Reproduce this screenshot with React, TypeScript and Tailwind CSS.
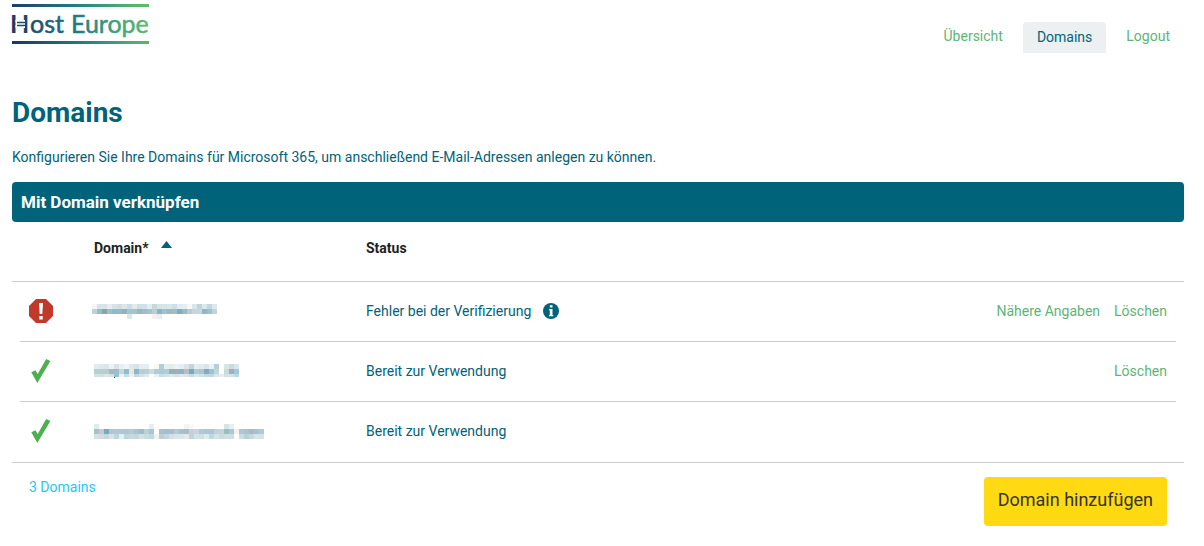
type DomainRow = {
  id: string;
  ok: boolean;
  status: string;
  actions: string[];
  mask: string[][];
};

// Masked domain names, one colour per 5px cell ("-" = empty)
const domains: DomainRow[] = [
  {
    id: "domain-1",
    ok: false,
    status: "Fehler bei der Verifizierung",
    actions: ["Nähere Angaben", "Löschen"],
    mask: [
      "f4f5f4 d3e5ea d8e3e4 e3eef1 d5e4ea d1dfe0 dbe8ea c9dfe6 e3eaea cfdfe6 cfe1ea e2eef2 c7d7dc d4e5e9 d8e5e8 dae6e8 cbe1e8 e1eeef e2eff2 f6f8f6 d9e5ec c1d4dd dae7ec c2d8de dceaed".split(" "),
      "c0d1d5 92bdca 88a6aa 9bc0ca 91b9c8 92bbc8 8fb2bc a2c5cf a2c4cd 9eb5bb a4bbc4 a5c4cc b9cfd2 90b4bf 9cc4d0 9dbac4 a7b9c1 74afc4 9dbac1 b2cdd5 cbd5d8 c5d8db 92b5c1 9ec0cf c2d4db".split(" "),
      "- - - - - - - d9e7e9 - - - - f5efee e3f1f6".split(" "),
    ],
  },
  {
    id: "domain-2",
    ok: true,
    status: "Bereit zur Verwendung",
    actions: ["Löschen"],
    mask: [
      "e2ecee dde9eb d9e6ea edf3f5 d3e4eb e7eff1 f0f4f5 dce9ed d4e5e8 e6eef0 e4edf0 - f7f8f4 b1ced6 e3eeef e2edef ecf2f3 e3eef0 d8e4e9 c4d4d9 e5eef2 e3eced d8e6ea ebf1f5 b6ced7 - d7e5e5 c8dcdf d9e7ed".split(" "),
      "b8ced3 b7ced4 b8cdd2 a6b8bb 9cbfca c4d9df 96bbc8 e9e6df 8db5c6 b8ccd2 bccfd8 cbdde0 b3cdd7 a9cbd5 b2ccd2 97b0b6 9eb0b4 90b4bf b6bec2 75abbf b2cad1 aec5ce 82aaba a2c1cd c1d5dd - cbd9d8 a1afbd 9fc8d8".split(" "),
      "d5e2e4 d2e1e5 dce6e8 dcdfe2 91c3d1 eaf1f2 c5dde4 e8f2f3 c5d7d9 d6e3e6 dce9ec - e6eff1 c6dfe6 d1e2e6 dce8ec d3e2e7 dde9ec dde4e8 c4dbe2 d8e5ea d0e1e5 c4d9de bfd7de dae8ed e4efee d3e1e3 d5e1e8 bbd9e1".split(" "),
    ],
  },
  {
    id: "domain-3",
    ok: true,
    status: "Bereit zur Verwendung",
    actions: [],
    mask: [
      "e0eceb - - - - - - - - - - e7eef0 - - - - - - f0f4f5 f8fbfc - - - - - - d4e4e4 e5eef1".split(" "),
      "a9c2c9 c1cbd0 77abbd a8cbd1 b0cad0 aac9d1 adc7d2 b0ced1 a9c5c9 99bfce bbd2d2 a9c8ce - a9c1c8 a1c2cc a2c1cf b5cad4 a6c3cc aeb9ca bfd4da cbd5d7 aecad3 a7c8d4 abc8d0 bdd3d9 c1d4d8 9bbdc0 adc8d2 f6eeec adc8d3 acc3c7 9fbdca a4c3ce b1c9d3".split(" "),
      "d4e1e5 d7d9dd c9d6dc e4dfe1 b9d8e1 e6f0f2 bdd7de c9dadd c6d7da d5e1e3 cadce0 bed9df eef4f3 c0ccd2 c4d5dc d1e1e8 dce3e9 dce6ea e8ebe5 c2d1dc d3e3e8 d0e1e6 e1e9ed bfd9e0 d3e3e8 c8dce1 d0dfe4 d3dce4 - c9dde3 b5d1da c6dadd d7e4e8 d5e2e6".split(" "),
    ],
  },
];

const Logo = () => (
  <svg
    width="141"
    height="42"
    viewBox="-3 0 141 42"
    role="img"
    aria-label="HostEurope"
    className="-ml-[3px]"
  >
    <defs>
      <linearGradient id="brand" gradientUnits="userSpaceOnUse" x1="0" y1="36" x2="137" y2="8">
        <stop offset="0" stopColor="#1f3561" />
        <stop offset="0.5" stopColor="#218083" />
        <stop offset="0.8" stopColor="#48a878" />
        <stop offset="1" stopColor="#63bb66" />
      </linearGradient>
    </defs>
    <rect y="1" width="137" height="3" fill="url(#brand)" />
    <rect y="38" width="137" height="3" fill="url(#brand)" />
    <g fill="url(#brand)" stroke="url(#brand)" strokeWidth="0.5" fontFamily="Lato, sans-serif" fontSize="25">
      <text x="-2" y="30" fontWeight="700" stroke="none">
        H
      </text>
      <text x="18" y="30">ost</text>
      <text x="59" y="30">Europe</text>
    </g>
    {/* split crossbar of the H */}
    <rect x="3.5" y="17" width="9.5" height="8" fill="#fff" />
    <path d="M5 19.500h8.500M5 22.500h8.500" stroke="#1f4a6c" strokeWidth="1.500" />
  </svg>
);

const ErrorIcon = () => (
  <svg width="24" height="24" viewBox="0 0 24 24" role="img" aria-label="Fehler">
    <path d="M7 0h10l7 7v10l-7 7H7l-7-7V7z" fill="#c0392b" />
    <path d="M10 4h4l-.7 11h-2.6zM10.300 17h3.400v3.400h-3.400z" fill="#fff" />
  </svg>
);

const CheckIcon = () => (
  <svg width="20" height="24" viewBox="0 0 20 24" role="img" aria-label="Bereit">
    <path d="M0.300 13.300L4.500 11.300L6.700 15L15.200 0L19.400 2L6.300 24Z" fill="#4caf50" />
  </svg>
);

const InfoIcon = () => (
  <svg width="16" height="16" viewBox="0 0 16 16" aria-hidden="true">
    <circle cx="8" cy="8" r="8" fill="#00637a" />
    <path d="M6.800 2.300h2.700v2.200h-2.700zM6 6h3.500v6h.8v1.200H6V12h.8V7.200H6z" fill="#fff" />
  </svg>
);

const MaskedName = ({ row }: { row: DomainRow }) => (
  <svg
    width={row.mask[1].length * 5}
    height="15"
    shapeRendering="crispEdges"
    className={row.ok ? "" : "-ml-0.5"}
    aria-hidden="true"
  >
    {row.mask.map((line, y) =>
      line.map((color, x) =>
        color === "-" ? null : (
          <rect
            key={`${x}-${y}`}
            x={x * 5}
            y={y * 5}
            width="5"
            height={row.id === "domain-2" && y === 2 ? 3 : 5}
            fill={`#${color}`}
          />
        ),
      ),
    )}
    {row.id === "domain-2" && <rect x="20" y="13" width="1" height="1" fill="#00637a" />}
  </svg>
);

const App = () => {
  return (
    <div className="pl-3 pr-5 font-[Roboto,sans-serif] text-sm text-[#00637a]">
      <header className="flex items-start justify-between pt-[3px]">
        <a href="#home">
          <Logo />
        </a>
        <nav className="flex items-start pt-[19px] leading-[21px] text-[#5cb577]">
          <a href="#uebersicht" className="px-5 py-1">
            Übersicht
          </a>
          <a
            href="#domains"
            aria-current="page"
            className="rounded-t bg-[#ecf0f1] px-3.5 py-[5px] text-[#00637a]"
          >
            Domains
          </a>
          <a href="#logout" className="py-1 pl-5 pr-3.5">
            Logout
          </a>
        </nav>
      </header>

      <main>
        <h1 className="mt-11 text-[28px] font-bold leading-8">Domains</h1>
        <p className="mt-[18px] leading-5">
          Konfigurieren Sie Ihre Domains für Microsoft 365, um anschließend E-Mail-Adressen anlegen zu
          können.
        </p>

        <h2 className="mt-[15px] rounded bg-[#00637a] px-[9px] text-[17px] font-bold leading-10 text-white">
          Mit Domain verknüpfen
        </h2>

        <table className="w-full table-fixed border-collapse border-b border-[#ccc]">
          <colgroup>
            <col className="w-[82px]" />
            <col className="w-[272px]" />
            <col />
            <col className="w-[260px]" />
          </colgroup>
          <thead>
            <tr className="h-[59px] border-b border-[#ccc] text-left align-top font-bold leading-5 text-[#222]">
              <td />
              <th className="pt-4">
                <button type="button" className="flex items-center gap-3">
                  Domain*
                  <svg width="11" height="14" viewBox="0 0 11 14" aria-hidden="true">
                    <path d="M0 7L5.500 0L11 7z" fill="#00637a" />
                  </svg>
                </button>
              </th>
              <th className="pt-4">Status</th>
              <td />
            </tr>
          </thead>
          <tbody className="[&>tr:last-child_div]:border-transparent">
            {domains.map((row) => (
              <tr key={row.id}>
                <td className="pl-2">
                  <div className="flex h-[60px] items-center border-b border-[#ccc] pl-[9px]">
                    {row.ok ? (
                      <span className="pl-0.5">
                        <CheckIcon />
                      </span>
                    ) : (
                      <ErrorIcon />
                    )}
                  </div>
                </td>
                <td>
                  <div className="flex h-[60px] items-center border-b border-[#ccc]">
                    <MaskedName row={row} />
                  </div>
                </td>
                <td>
                  <div className="flex h-[60px] items-center gap-3 border-b border-[#ccc] pb-px">
                    {row.status}
                    {!row.ok && (
                      <button type="button" aria-label="Info">
                        <InfoIcon />
                      </button>
                    )}
                  </div>
                </td>
                <td className="pr-2">
                  <div className="flex h-[60px] items-center justify-end gap-3.5 border-b border-[#ccc] pb-px pr-[9px] text-[#5cb577]">
                    {row.actions.map((action) => (
                      <a key={action} href="#aktion">
                        {action}
                      </a>
                    ))}
                  </div>
                </td>
              </tr>
            ))}
          </tbody>
        </table>

        <div className="flex items-start justify-between px-[17px] pt-3.5">
          <span className="text-[#1fc8f5]">3 Domains</span>
          <button
            type="button"
            className="rounded bg-[#ffd912] px-3.5 pb-3 pt-2 text-lg leading-[29px] text-[#333]"
          >
            Domain hinzufügen
          </button>
        </div>
      </main>
    </div>
  );
};

export default App;
